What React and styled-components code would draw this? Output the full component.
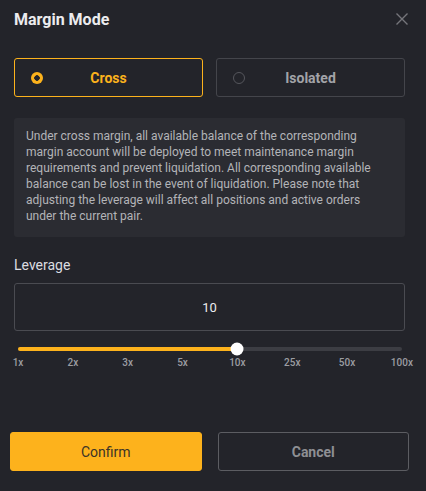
import styled, { createGlobalStyle } from "styled-components";

const GlobalStyle = createGlobalStyle`
    html, body {
        margin: 0;
        padding: 0;
        background: #23242a;
    }
    * { box-sizing: border-box; }
`;

const Modal = styled.div`
    width: 426px;
    height: 491px;
    background: #23242a;
    font-family: Roboto, "Noto Sans", sans-serif;
    color: #e6e6e8;
    display: flex;
    flex-direction: column;
    padding: 0 21px 0 14px;
`;

const Header = styled.div`
    display: flex;
    justify-content: space-between;
    align-items: center;
    height: 36px;
    padding-top: 2px;
`;

const Title = styled.div`
    font-size: 16px;
    font-weight: 700;
    color: #ececee;
`;

const Close = styled.button`
    background: none;
    border: none;
    padding: 0;
    margin-right: -4px;
    display: flex;
    cursor: pointer;
`;

const ModeRow = styled.div`
    display: grid;
    grid-template-columns: 1fr 1fr;
    gap: 13px;
    margin-top: 22px;
`;

const ModeButton = styled.div`
    height: 39px;
    border-radius: 3px;
    border: 1px solid ${({ active }) => (active ? "#fcb21c" : "#44454b")};
    display: flex;
    align-items: center;
    position: relative;
    justify-content: center;
    font-size: 14px;
    font-weight: 700;
    color: ${({ active }) => (active ? "#fcb21c" : "#a2a3a8")};
    cursor: pointer;
`;

const Radio = styled.span`
    position: absolute;
    left: 16px;
    top: 13px;
    width: 12px;
    height: 12px;
    border-radius: 50%;
    ${({ active }) =>
        active
            ? `background: radial-gradient(circle, #23242a 0 2.5px, #fcb21c 3px);`
            : `border: 1px solid #55565c;`}
`;

const Notice = styled.div`
    margin-top: 21px;
    background: #2b2c32;
    border-radius: 3px;
    padding: 10px 12px 13px;
    font-size: 12px;
    line-height: 16px;
    color: #b3b4b8;
`;

const Label = styled.div`
    margin-top: 20px;
    font-size: 14px;
    color: #dcdde0;
`;

const Input = styled.div`
    margin-top: 10px;
    height: 48px;
    border: 1px solid #4a4b51;
    border-radius: 3px;
    display: flex;
    align-items: center;
    justify-content: center;
    font-size: 13px;
    color: #ececee;
`;

const Slider = styled.div`
    margin: 12px 3px 0 4px;
    height: 12px;
    display: flex;
    align-items: center;
`;

const Track = styled.div`
    flex: 1;
    height: 4px;
    border-radius: 2px;
    background: #3c3d43;
    position: relative;
`;

const Fill = styled.div`
    position: absolute;
    left: 0;
    top: 0;
    bottom: 0;
    border-radius: 2px;
    background: #fcb21c;
`;

const Thumb = styled.div`
    position: absolute;
    top: 50%;
    width: 13px;
    height: 13px;
    border-radius: 50%;
    background: #ffffff;
    transform: translate(-50%, -50%);
`;

const Ticks = styled.div`
    margin: 2px 3px 0 4px;
    display: flex;
    justify-content: space-between;
`;

const Tick = styled.span`
    width: 0;
    display: flex;
    justify-content: center;
    white-space: nowrap;
    font-size: 10px;
    font-weight: 500;
    color: #9c9da2;
`;

const Footer = styled.div`
    margin: auto -4px 20px;
    display: grid;
    grid-template-columns: 1fr 1fr;
    gap: 16px;
`;

const Button = styled.button`
    height: 39px;
    border-radius: 3px;
    font-family: inherit;
    font-size: 14px;
    font-weight: ${({ primary }) => (primary ? 400 : 700)};
    background: ${({ primary }) => (primary ? "#fdb21c" : "transparent")};
    color: ${({ primary }) => (primary ? "#3b3427" : "#8e8f94")};
    border: 1px solid ${({ primary }) => (primary ? "#fdb21c" : "#5c5d62")};
    cursor: pointer;
`;

const ticks = ["1x", "2x", "3x", "5x", "10x", "25x", "50x", "100x"];
const value = 4 / 7;

const App = () => {
    return (
        <>
            <GlobalStyle />
            <Modal>
                <Header>
                    <Title>Margin Mode</Title>
                    <Close>
                        <svg width="14" height="14" viewBox="0 0 14 14">
                            <path d="M1.5 1.5 L12.5 12.5 M12.5 1.5 L1.5 12.5" stroke="#75767b" strokeWidth="1.4" />
                        </svg>
                    </Close>
                </Header>
                <ModeRow>
                    <ModeButton active>
                        <Radio active />
                        Cross
                    </ModeButton>
                    <ModeButton>
                        <Radio />
                        Isolated
                    </ModeButton>
                </ModeRow>
                <Notice>
                    Under cross margin, all available balance of the corresponding margin account will be deployed to meet maintenance margin requirements and prevent liquidation. All corresponding available balance can be lost in the event of liquidation. Please note that adjusting the leverage will affect all positions and active orders under the current pair.
                </Notice>
                <Label>Leverage</Label>
                <Input>10</Input>
                <Slider>
                    <Track>
                        <Fill style={{ width: `${value * 100}%` }} />
                        <Thumb style={{ left: `${value * 100}%` }} />
                    </Track>
                </Slider>
                <Ticks>
                    {ticks.map((t) => (
                        <Tick key={t}>{t}</Tick>
                    ))}
                </Ticks>
                <Footer>
                    <Button primary>Confirm</Button>
                    <Button>Cancel</Button>
                </Footer>
            </Modal>
        </>
    );
};

export default App;
